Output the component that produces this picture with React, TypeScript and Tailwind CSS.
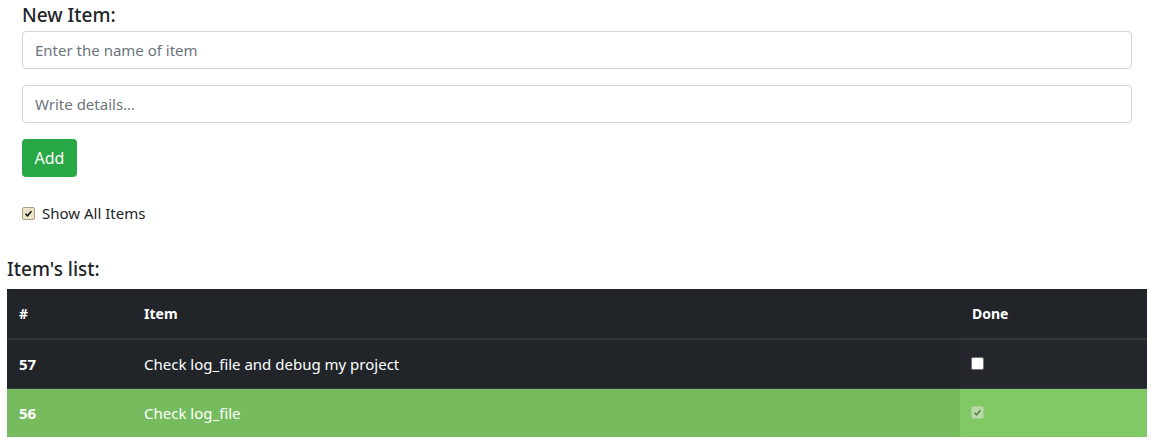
import React from "react";

function Check({ color = "#111" }: { color?: string }) {
  return (
    <svg viewBox="0 0 13 13" width="13" height="13">
      <path d="M3 6.8 L5.3 9.2 L10 3.8" fill="none" stroke={color} strokeWidth="1.8" />
    </svg>
  );
}

export default function App() {
  return (
    <div className="w-[1151px] h-[441px] bg-white text-[#212529] overflow-hidden" style={{ fontFamily: '"Noto Sans", "Open Sans", sans-serif' }}>
      <div className="px-[22px] pt-[3px] w-[1132px] box-content pr-0">
        <h5 className="text-[19px] leading-[24px] font-medium mb-[4px]">New Item:</h5>
        <input
          className="block w-[1110px] h-[38px] px-[12px] text-[15px] border border-[#ced4da] rounded-[4px] placeholder:text-[#6c757d] outline-none"
          placeholder="Enter the name of item"
        />
        <input
          className="block w-[1110px] h-[38px] mt-[16px] px-[12px] text-[15px] border border-[#ced4da] rounded-[4px] placeholder:text-[#6c757d] outline-none"
          placeholder="Write details..."
        />
        <button className="mt-[16px] h-[38px] w-[55px] bg-[#28a745] text-white text-[16px] rounded-[4px]">Add</button>
        <div className="flex items-center mt-[28px] gap-[7px] h-[16px]">
          <span className="w-[13px] h-[13px] border border-[#a8a08a] bg-[#efe4c6] rounded-[2px] flex items-center justify-center">
            <Check />
          </span>
          <span className="text-[15px] leading-[16px]">Show All Items</span>
        </div>
      </div>
      <h5 className="ml-[7px] mt-[36px] text-[19px] leading-[24px] font-medium">Item's list:</h5>
      <table className="ml-[7px] mt-[8px] w-[1140px] border-collapse text-[15px] text-white">
        <thead>
          <tr className="bg-[#212529] h-[50px] border-b-2 border-[#32383e]">
            <th className="w-[125px] text-left px-[12px] font-bold text-[14px]">#</th>
            <th className="w-[828px] text-left px-[12px] font-bold text-[14px]">Item</th>
            <th className="text-left px-[12px] font-bold text-[14px]">Done</th>
          </tr>
        </thead>
        <tbody>
          <tr className="bg-[#212529] h-[49px] border-t border-[#32383e]">
            <td className="px-[12px] font-bold">57</td>
            <td className="px-[12px]">Check log_file and debug my project</td>
            <td className="pl-[11px] pr-[12px] bg-[#23272b]">
              <span className="block w-[13px] h-[13px] bg-white border border-[#767676] rounded-[2px]" />
            </td>
          </tr>
          <tr className="bg-[#76bb5d] h-[49px] border-t border-[#32383e]">
            <td className="px-[12px] font-bold">56</td>
            <td className="px-[12px]">Check log_file</td>
            <td className="pl-[11px] pr-[12px] bg-[#80c965]">
              <span className="flex items-center justify-center w-[13px] h-[13px] bg-[#b9dca6] border border-[#a6cc94] rounded-[2px]">
                <Check color="#5d7a50" />
              </span>
            </td>
          </tr>
        </tbody>
      </table>
    </div>
  );
}
